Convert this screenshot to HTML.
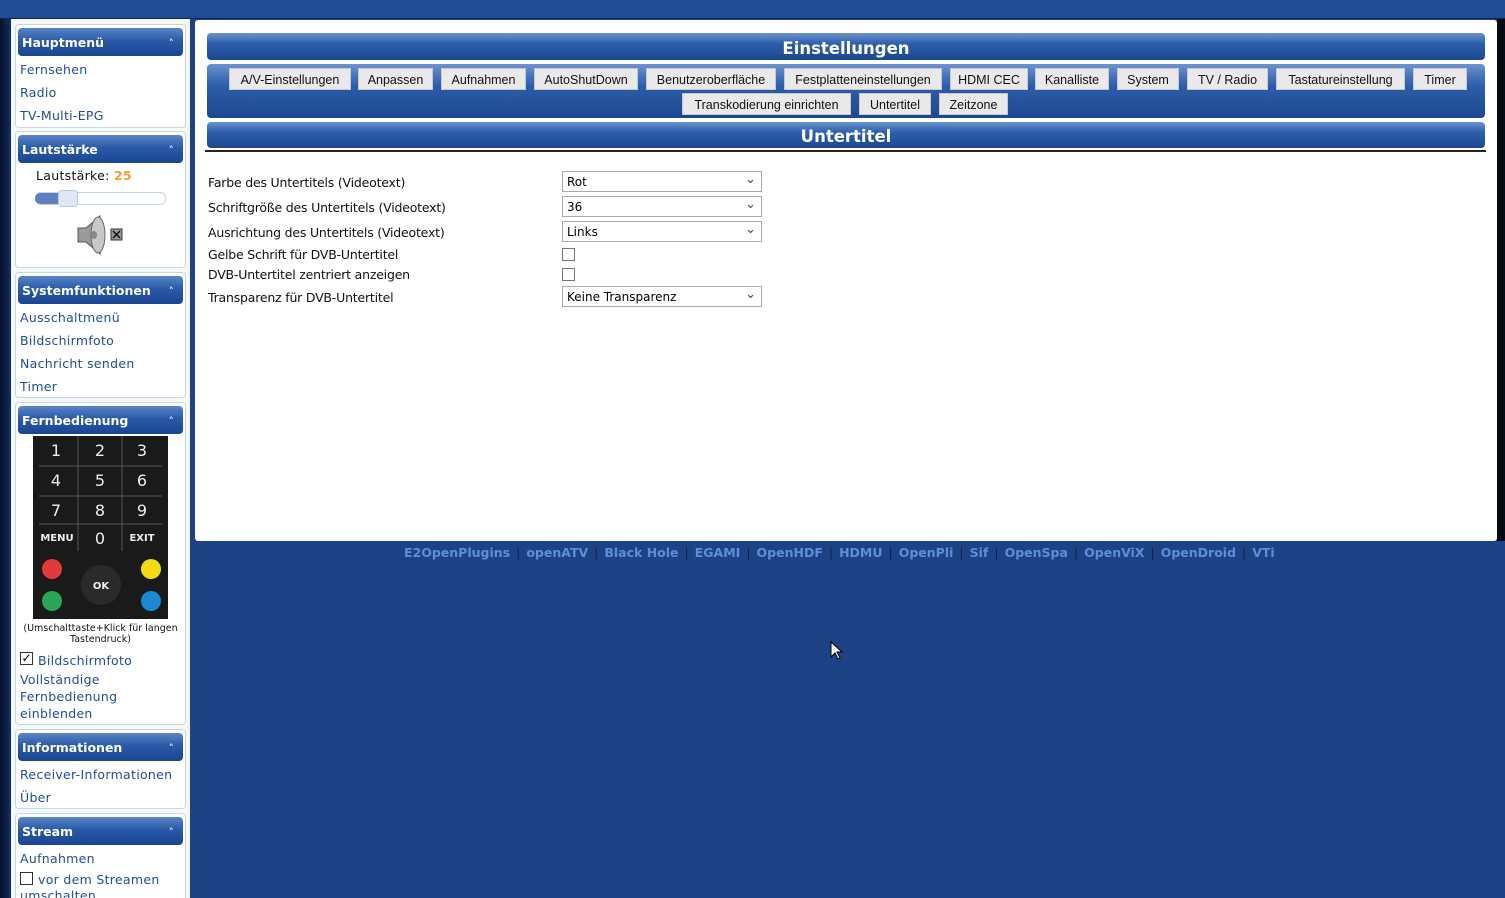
<!DOCTYPE html>
<html><head><meta charset="utf-8"><style>
*{margin:0;padding:0;box-sizing:border-box}
html{overflow:hidden;width:1505px;height:898px}
body{width:1505px;height:898px;overflow:hidden;background:#1d4386;font-family:"DejaVu Sans","Liberation Sans",sans-serif;position:relative}
.abs{position:absolute}
.top{left:0;top:0;width:1505px;height:19px;background:#214b92;border-bottom:1px solid #0f2550}
.lstrip{left:0;top:19px;width:11px;height:879px;background:linear-gradient(90deg,#06122a,#142f66)}
.side{left:11px;top:19px;width:179px;height:879px;background:#f4f8fc}
.box{position:absolute;left:15px;width:171px;background:#fff;border:1px solid #c7d7e8;border-radius:4px}
.hd{position:absolute;left:2px;right:2px;top:3px;height:28px;border-radius:4px;background:linear-gradient(#5a86c6,#2a5aa8 45%,#1a4590);color:#fff;font-weight:bold;font-size:12.5px;line-height:29px;padding-left:4px}
.hd:after{content:"˄";position:absolute;right:9px;top:1px;font-size:11px;font-weight:normal}
.lk{position:absolute;left:4px;color:#1f4e96;font-size:12.5px;letter-spacing:0.3px}
.main{left:195px;top:20px;width:1302px;height:521px;background:#fff;border-radius:3px}
.rstrip{left:1497px;top:19px;width:8px;height:522px;background:#050a14}
.bar{position:absolute;left:12px;width:1278px;border-radius:4px;background:linear-gradient(#6a93cf,#2d5eab 40%,#1c478f);color:#fff;font-weight:bold;text-align:center;font-size:16.5px}
.btn{position:absolute;height:22px;background:#e9e9e9;border:1px solid #c9c9c9;font-family:"Liberation Sans",sans-serif;font-size:12.5px;line-height:22px;text-align:center;color:#111}
.lab{position:absolute;left:13px;font-size:12.5px;color:#111;font-family:"DejaVu Sans",sans-serif;letter-spacing:-0.2px}
.sel{position:absolute;left:367px;width:200px;height:21px;border:1px solid #a9a9a9;font-size:12px;line-height:21px;padding-left:4px;color:#000;font-family:"DejaVu Sans",sans-serif}
.sel:after{content:"⌄";position:absolute;right:5px;top:-3px;font-size:13px;color:#444}
.cb{position:absolute;left:367px;width:13px;height:13px;border:1px solid #777;background:#fff}
.foot{left:404px;top:545px;font-weight:bold;font-size:12.5px;color:#5d8ed8;white-space:nowrap}
.foot span.s{color:#0c2452;margin:0 6px;font-weight:normal}
</style></head><body>
<div class="abs top"></div>
<div class="abs lstrip"></div>
<div class="abs side"></div>

<div class="box" style="top:24px;height:104px"><div class="hd">Hauptmenü</div>
<div class="lk" style="top:37px">Fernsehen</div><div class="lk" style="top:60px">Radio</div><div class="lk" style="top:83px">TV-Multi-EPG</div></div>

<div class="box" style="top:131px;height:137px"><div class="hd">Lautstärke</div>
<div class="abs" style="left:20px;top:36px;font-size:12.5px;color:#111;letter-spacing:0.3px">Lautstärke: <b style="color:#f0a030">25</b></div>
<div class="abs" style="left:19px;top:60px;width:131px;height:13px;border:1px solid #c5d3e3;border-radius:6px;background:#fff"></div>
<div class="abs" style="left:19px;top:61px;width:30px;height:11px;background:#5f82bf;border-radius:5px 0 0 5px"></div>
<div class="abs" style="left:42px;top:58px;width:20px;height:17px;background:#dfe9f5;border:1px solid #b6c9e0;border-radius:4px"></div>
<svg class="abs" style="left:60px;top:82px" width="50" height="42"><path d="M2 14h8l14-12v38l-14-12H2z" fill="#9a9a9a" stroke="#555"/><ellipse cx="22" cy="21" rx="7" ry="18" fill="#c8c8c8" stroke="#666"/><ellipse cx="18" cy="21" rx="3" ry="4" fill="#888"/><rect x="35" y="15" width="11" height="11" fill="#999" stroke="#333"/><path d="M37 17l7 7M44 17l-7 7" stroke="#111" stroke-width="1.5"/></svg>
</div>

<div class="box" style="top:272px;height:126px"><div class="hd">Systemfunktionen</div>
<div class="lk" style="top:37px">Ausschaltmenü</div><div class="lk" style="top:60px">Bildschirmfoto</div><div class="lk" style="top:83px">Nachricht senden</div><div class="lk" style="top:106px">Timer</div></div>

<div class="box" style="top:402px;height:323px"><div class="hd">Fernbedienung</div>
<div class="abs" style="left:17px;top:33px;width:135px;height:183px;background:#1a1a1a"></div>
<svg class="abs" style="left:17px;top:33px" width="135" height="183" font-family="DejaVu Sans" fill="#eee">
<g stroke="#555"><line x1="45" y1="0" x2="45" y2="115"/><line x1="89" y1="0" x2="89" y2="115"/><line x1="6" y1="30" x2="129" y2="30"/><line x1="6" y1="60" x2="129" y2="60"/><line x1="6" y1="88" x2="129" y2="88"/></g>
<g font-size="16" text-anchor="middle"><text x="23" y="20">1</text><text x="67" y="20">2</text><text x="109" y="20">3</text><text x="23" y="50">4</text><text x="67" y="50">5</text><text x="109" y="50">6</text><text x="23" y="80">7</text><text x="67" y="80">8</text><text x="109" y="80">9</text><text x="67" y="108">0</text></g>
<g font-size="10" font-weight="bold" text-anchor="middle"><text x="24" y="105">MENU</text><text x="109" y="105">EXIT</text></g>
<circle cx="19" cy="133" r="10" fill="#e03a3a"/><circle cx="19" cy="165" r="10" fill="#2aa556"/><circle cx="118" cy="133" r="10" fill="#f2dc10"/><circle cx="118" cy="165" r="10" fill="#1a8ad6"/>
<circle cx="68" cy="149" r="20" fill="#2a2a2a"/><text x="68" y="153" font-size="10" font-weight="bold" text-anchor="middle">OK</text>
</svg>
<div class="abs" style="left:0;width:169px;top:220px;font-size:9.5px;text-align:center;color:#111;line-height:11px">(Umschalttaste+Klick für langen Tastendruck)</div>
<div class="abs" style="left:4px;top:249px;width:13px;height:13px;border:1px solid #333;font-size:12px;line-height:11px;text-align:center">✓</div>
<div class="lk" style="left:22px;top:250px">Bildschirmfoto</div>
<div class="lk" style="top:268px;line-height:17px">Vollständige<br>Fernbedienung<br>einblenden</div></div>

<div class="box" style="top:729px;height:80px"><div class="hd">Informationen</div>
<div class="lk" style="top:37px">Receiver-Informationen</div><div class="lk" style="top:60px">Über</div></div>

<div class="box" style="top:813px;height:100px"><div class="hd">Stream</div>
<div class="lk" style="top:37px">Aufnahmen</div>
<div class="abs" style="left:4px;top:58px;width:13px;height:13px;border:1px solid #333;background:#fff"></div>
<div class="lk" style="left:22px;top:58px">vor dem Streamen</div><div class="lk" style="top:74px">umschalten</div></div>

<div class="abs main">
<div class="bar" style="top:13px;height:27px;line-height:31px">Einstellungen</div>
<div class="bar" style="top:44px;height:54px"></div>
<div class="bar" style="top:102px;height:26px;line-height:30px">Untertitel</div>
<div class="abs" style="left:10px;top:130px;width:1281px;height:2px;background:#222"></div>
<div class="btn" style="left:34px;top:48px;width:122px">A/V-Einstellungen</div>
<div class="btn" style="left:163px;top:48px;width:75px">Anpassen</div>
<div class="btn" style="left:246px;top:48px;width:85px">Aufnahmen</div>
<div class="btn" style="left:339px;top:48px;width:104px">AutoShutDown</div>
<div class="btn" style="left:451px;top:48px;width:130px">Benutzeroberfläche</div>
<div class="btn" style="left:589px;top:48px;width:158px">Festplatteneinstellungen</div>
<div class="btn" style="left:755px;top:48px;width:78px">HDMI CEC</div>
<div class="btn" style="left:840px;top:48px;width:74px">Kanalliste</div>
<div class="btn" style="left:922px;top:48px;width:62px">System</div>
<div class="btn" style="left:992px;top:48px;width:81px">TV / Radio</div>
<div class="btn" style="left:1081px;top:48px;width:129px">Tastatureinstellung</div>
<div class="btn" style="left:1218px;top:48px;width:54px">Timer</div>
<div class="btn" style="left:487px;top:73px;width:169px">Transkodierung einrichten</div>
<div class="btn" style="left:664px;top:73px;width:72px">Untertitel</div>
<div class="btn" style="left:744px;top:73px;width:69px">Zeitzone</div>

<div class="lab" style="top:155px">Farbe des Untertitels (Videotext)</div>
<div class="lab" style="top:180px">Schriftgröße des Untertitels (Videotext)</div>
<div class="lab" style="top:205px">Ausrichtung des Untertitels (Videotext)</div>
<div class="lab" style="top:227px">Gelbe Schrift für DVB-Untertitel</div>
<div class="lab" style="top:247px">DVB-Untertitel zentriert anzeigen</div>
<div class="lab" style="top:270px">Transparenz für DVB-Untertitel</div>
<div class="sel" style="top:151px">Rot</div>
<div class="sel" style="top:176px">36</div>
<div class="sel" style="top:201px">Links</div>
<div class="cb" style="top:228px"></div>
<div class="cb" style="top:248px"></div>
<div class="sel" style="top:266px">Keine Transparenz</div>
</div>
<div class="abs rstrip"></div>

<div class="abs foot">E2OpenPlugins<span class="s">|</span>openATV<span class="s">|</span>Black Hole<span class="s">|</span>EGAMI<span class="s">|</span>OpenHDF<span class="s">|</span>HDMU<span class="s">|</span>OpenPli<span class="s">|</span>Sif<span class="s">|</span>OpenSpa<span class="s">|</span>OpenViX<span class="s">|</span>OpenDroid<span class="s">|</span>VTi</div>
<svg class="abs" style="left:830px;top:641px" width="14" height="20"><path d="M1 1v15l4-4 3 6 2-1-3-6h5z" fill="#fff" stroke="#000"/></svg>
</body></html>
